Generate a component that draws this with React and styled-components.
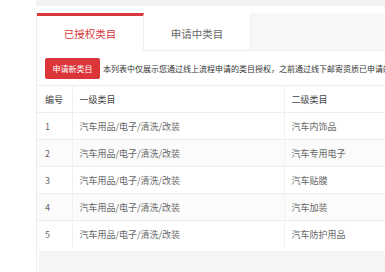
import styled, { createGlobalStyle } from "styled-components";

const GlobalStyle = createGlobalStyle`
  html, body {
    margin: 0;
    padding: 0;
    background: #fff;
    font-family: "Noto Sans CJK SC", "Noto Sans", sans-serif;
  }
`;

const Page = styled.div`
  width: 385px;
  height: 272px;
  display: flex;
  overflow: hidden;
`;

const Sidebar = styled.div`
  width: 36px;
  flex-shrink: 0;
  background: #fff;
`;

const Main = styled.div`
  flex: 1;
  min-width: 0;
  display: flex;
  flex-direction: column;
  overflow: hidden;
`;

const TopStrip = styled.div`
  height: 6px;
  flex-shrink: 0;
  background: #f2f2f2;
  margin-bottom: 7px;
`;

const Panel = styled.div`
  flex: none;
  display: flex;
  flex-direction: column;
  border-left: 1px solid #ececec;
  width: 460px;
`;

const TabBar = styled.div`
  display: flex;
  flex-shrink: 0;
  height: 38px;
  background: #f8f8f8;
  border-bottom: 1px solid #eeeeee;
  box-sizing: border-box;
`;

const Tab = styled.div`
  width: 107px;
  display: flex;
  align-items: center;
  justify-content: center;
  box-sizing: border-box;
  background: #fff;
  font-size: 10.5px;
  color: ${(p) => (p.active ? "#d8393c" : "#666")};
  border-top: 3px solid ${(p) => (p.active ? "#d8393c" : "#fff")};
  border-right: 1px solid #eeeeee;
  margin-bottom: ${(p) => (p.active ? "-1px" : "0")};
`;

const Toolbar = styled.div`
  display: flex;
  flex-shrink: 0;
  align-items: center;
  gap: 3px;
  height: 34px;
  padding: 0 8px;
  box-sizing: border-box;
  white-space: nowrap;
`;

const ApplyButton = styled.button`
  height: 21px;
  width: 55px;
  padding: 0;
  border: none;
  border-radius: 2px;
  background: #db3539;
  color: #fff;
  font-family: inherit;
  font-size: 8px;
  flex-shrink: 0;
`;

const Notice = styled.span`
  font-size: 8px;
  color: #333;
`;

const Table = styled.table`
  border-collapse: collapse;
  width: 460px;
  table-layout: fixed;
  font-size: 9px;
  color: #666;
`;

const Row = styled.tr`
  height: 27px;
  background: ${(p) => (p.striped ? "#fbfbfb" : "#fff")};
  border-top: 1px solid #eeeeee;
`;

const HeadCell = styled.th`
  font-weight: normal;
  color: #444;
  text-align: left;
  padding: 0 0 0 ${(p) => p.pad || 8}px;
  border-left: ${(p) => (p.first ? "none" : "1px solid #f0f0f0")};
`;

const Cell = styled.td`
  padding: 0 0 0 ${(p) => p.pad || 8}px;
  border-left: ${(p) => (p.first ? "none" : "1px solid #f0f0f0")};
`;

const Footer = styled.div`
  flex-shrink: 0;
  margin: 3px 0 0 2px;
  height: 30px;
  background: #f5f5f5;
`;

const rows = [
  { id: 1, sub: "汽车内饰品" },
  { id: 2, sub: "汽车专用电子" },
  { id: 3, sub: "汽车贴膜" },
  { id: 4, sub: "汽车加装" },
  { id: 5, sub: "汽车防护用品" },
];

const App = () => {
  return (
    <>
      <GlobalStyle />
      <Page>
        <Sidebar />
        <Main>
          <TopStrip />
          <Panel>
            <TabBar>
              <Tab active>已授权类目</Tab>
              <Tab>申请中类目</Tab>
            </TabBar>
            <Toolbar>
              <ApplyButton>申请新类目</ApplyButton>
              <Notice>
                本列表中仅展示您通过线上流程申请的类目授权，之前通过线下邮寄资质已申请的类目不在此列表中展示
              </Notice>
            </Toolbar>
            <Table>
              <colgroup>
                <col style={{ width: 35 }} />
                <col style={{ width: 212 }} />
                <col />
              </colgroup>
              <thead>
                <Row>
                  <HeadCell first>编号</HeadCell>
                  <HeadCell pad={7}>一级类目</HeadCell>
                  <HeadCell pad={7}>二级类目</HeadCell>
                </Row>
              </thead>
              <tbody>
                {rows.map((r, i) => (
                  <Row key={r.id} striped={i % 2 === 1}>
                    <Cell first>{r.id}</Cell>
                    <Cell pad={7}>汽车用品/电子/清洗/改装</Cell>
                    <Cell pad={7}>{r.sub}</Cell>
                  </Row>
                ))}
              </tbody>
            </Table>
            <Footer />
          </Panel>
        </Main>
      </Page>
    </>
  );
};

export default App;
